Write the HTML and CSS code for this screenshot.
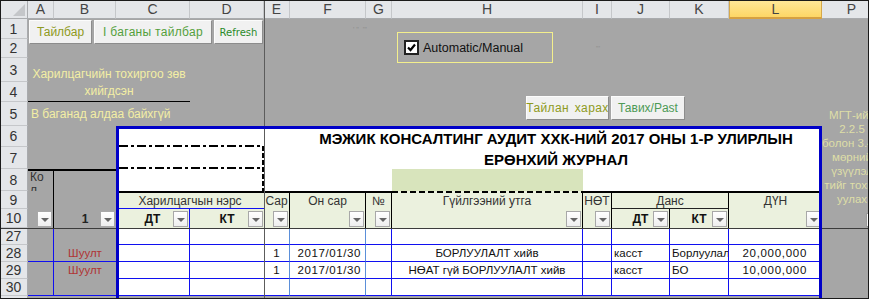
FILE: index.html
```html
<!DOCTYPE html>
<html lang="mn">
<head>
<meta charset="utf-8">
<title>Ерөнхий журнал</title>
<link rel="stylesheet" href="styles.css">
</head>
<body>
<div class="sheet">
  <!-- column headers -->
  <div class="corner col-rh row-h"><svg width="28" height="19" viewBox="0 0 28 19"><polygon points="13,16 25,16 25,4" fill="#c4c6c9"/></svg></div>
  <div class="ch col-a row-h">A</div>
  <div class="ch col-b row-h">B</div>
  <div class="ch col-c row-h">C</div>
  <div class="ch col-d row-h">D</div>
  <div class="ch col-e row-h">E</div>
  <div class="ch col-f row-h">F</div>
  <div class="ch col-g row-h">G</div>
  <div class="ch col-h row-h">H</div>
  <div class="ch col-i row-h">I</div>
  <div class="ch col-j row-h">J</div>
  <div class="ch col-k row-h">K</div>
  <div class="ch col-l row-h ch-sel">L</div>
  <div class="ch col-p row-h">P</div>

  <!-- row headers -->
  <div class="rh col-rh row-1">1</div>
  <div class="rh col-rh row-2">2</div>
  <div class="rh col-rh row-3">3</div>
  <div class="rh col-rh row-4">4</div>
  <div class="rh col-rh row-5">5</div>
  <div class="rh col-rh row-6">6</div>
  <div class="rh col-rh row-7">7</div>
  <div class="rh col-rh row-8">8</div>
  <div class="rh col-rh row-9">9</div>
  <div class="rh col-rh row-10">10</div>
  <div class="rh col-rh row-27">27</div>
  <div class="rh col-rh row-28">28</div>
  <div class="rh col-rh row-29">29</div>
  <div class="rh col-rh row-30">30</div>
  <div class="rh col-rh row-x"></div>

  <!-- top controls -->
  <div class="btnbar">
    <div class="btn btn-tailbar">Тайлбар</div>
    <div class="btn btn-col">I баганы тайлбар</div>
    <div class="btn btn-refresh">Refresh</div>
  </div>
  <div class="note note-main">Харилцагчийн тохиргоо зөв<br>хийгдсэн</div>
  <div class="note note-b">В баганад алдаа байхгүй</div>
  <div class="marks marks-1">' ''&nbsp;&nbsp;'''</div>
  <div class="marks marks-2">'''</div>
  <div class="chkgroup">
    <svg class="chk" width="15" height="15" viewBox="0 0 15 15"><rect x="1" y="1" width="13" height="13" fill="#fff" stroke="#222" stroke-width="2"/><path d="M4 7.5 L6.5 10 L11 4.5" fill="none" stroke="#000" stroke-width="2.2"/></svg>
    <span>Automatic/Manual</span>
  </div>
  <div class="btnbar2">
    <div class="btn btn-report">Тайлан харах</div>
    <div class="btn btn-past">Тавих/Past</div>
  </div>
  <div class="pnote">МГТ-ийн<br>2.2.5<br>болон 3.4.5<br>мөрний<br>үзүүлэл<br>тийг тохир<br>уулах</div>
  <div class="pbtn"></div>

  <!-- A8:B10 -->
  <div class="kol col-a row-8">Ко<br>л</div>
  <div class="b8 col-b row-8"></div>
  <div class="a9 col-a row-9"></div>
  <div class="a10 cellgrid col-a row-10"><span class="flt"></span></div>
  <div class="b10 cellgrid col-b row-10"><span class="lbl-mid">1</span><span class="flt"></span></div>

  <!-- title block -->
  <div class="tbl-white"></div>
  <div class="title">МЭЖИК КОНСАЛТИНГ АУДИТ ХХК-НИЙ 2017 ОНЫ 1-Р УЛИРЛЫН<br>ЕРӨНХИЙ ЖУРНАЛ</div>
  <svg class="dashes" width="148" height="65" viewBox="0 0 148 65">
    <line x1="3" y1="20" x2="147" y2="20" stroke="#000" stroke-width="2" stroke-dasharray="9 3 3 3"/>
    <line x1="3" y1="42" x2="147" y2="42" stroke="#000" stroke-width="2" stroke-dasharray="9 3 3 3"/>
    <line x1="147" y1="20" x2="147" y2="65" stroke="#000" stroke-width="2" stroke-dasharray="5 2"/>
  </svg>
  <div class="h8"></div>

  <!-- header rows 9-10 -->
  <div class="hc hc-name">Харилцагчын нэрс</div>
  <div class="hc cellgrid hc-sub col-c row-10 bl-blue"><span class="lbl-mid">ДТ</span><span class="flt"></span></div>
  <div class="hc cellgrid hc-sub col-d row-10"><span class="lbl-mid">КТ</span><span class="flt"></span></div>
  <div class="hc cellgrid hc-m col-e bk"><span class="lbl-top">Сар</span><span class="flt"></span></div>
  <div class="hc cellgrid hc-m col-f bk"><span class="lbl-top">Он сар</span><span class="flt"></span></div>
  <div class="hc cellgrid hc-m col-g bk"><span class="lbl-top">№</span><span class="flt"></span></div>
  <div class="hc cellgrid hc-m hc-dash col-h bk"><span class="lbl-top">Гүйлгээний утга</span><span class="flt"></span></div>
  <div class="hc cellgrid hc-m col-i bk"><span class="lbl-top">НӨТ</span><span class="flt"></span></div>
  <div class="hc hc-dans">Данс</div>
  <div class="hc cellgrid hc-sub col-j row-10 bk"><span class="lbl-mid">ДТ</span><span class="flt"></span></div>
  <div class="hc cellgrid hc-sub col-k row-10 bk"><span class="lbl-mid">КТ</span><span class="flt"></span></div>
  <div class="hc cellgrid hc-m col-l"><span class="lbl-top">ДҮН</span><span class="flt"></span></div>

  <!-- A-B data area -->
  <div class="ga col-a row-27"></div>
  <div class="ga ul col-a row-28"></div>
  <div class="ga col-a row-29"></div>
  <div class="ga ul col-a row-30"></div>
  <div class="gb col-b row-27"></div>
  <div class="gb ul col-b row-28">Шуулт</div>
  <div class="gb col-b row-29">Шуулт</div>
  <div class="gb ul col-b row-30"></div>

  <!-- row 27 -->
  <div class="d col-c row-27"></div>
  <div class="d col-d row-27"></div>
  <div class="d col-e row-27"></div>
  <div class="d col-f row-27"></div>
  <div class="d col-g row-27"></div>
  <div class="d col-h row-27"></div>
  <div class="d col-i row-27"></div>
  <div class="d col-j row-27"></div>
  <div class="d col-k row-27"></div>
  <div class="d col-l row-27"></div>
  <!-- row 28 -->
  <div class="d col-c row-28"></div>
  <div class="d col-d row-28"></div>
  <div class="d tc col-e row-28">1</div>
  <div class="d tr num col-f row-28">2017/01/30</div>
  <div class="d col-g row-28"></div>
  <div class="d tc col-h row-28">БОРЛУУЛАЛТ хийв</div>
  <div class="d col-i row-28"></div>
  <div class="d col-j row-28">касст</div>
  <div class="d col-k row-28">Борлуулалт</div>
  <div class="d tr amt col-l row-28">20,000,000</div>
  <!-- row 29 -->
  <div class="d col-c row-29"></div>
  <div class="d col-d row-29"></div>
  <div class="d tc col-e row-29">1</div>
  <div class="d tr num col-f row-29">2017/01/30</div>
  <div class="d col-g row-29"></div>
  <div class="d tc col-h row-29">НӨАТ гүй БОРЛУУЛАЛТ хийв</div>
  <div class="d col-i row-29"></div>
  <div class="d col-j row-29">касст</div>
  <div class="d col-k row-29">БО</div>
  <div class="d tr amt col-l row-29">10,000,000</div>
  <!-- row 30 -->
  <div class="d col-c row-30"></div>
  <div class="d col-d row-30"></div>
  <div class="d col-e row-30"></div>
  <div class="d col-f row-30"></div>
  <div class="d col-g row-30"></div>
  <div class="d col-h row-30"></div>
  <div class="d col-i row-30"></div>
  <div class="d col-j row-30"></div>
  <div class="d col-k row-30"></div>
  <div class="d col-l row-30"></div>

  <!-- overlays: frozen panes and table frame -->
  <div class="frz-v"></div>
  <div class="frz-h"></div>
  <div class="frame"></div>
  <div class="outline"></div>
</div>
</body>
</html>
```

FILE: styles.css
```css
* { box-sizing: border-box; margin: 0; padding: 0; }

body {
  margin: 0;
  background: #a6a6a6;
  font-family: "Liberation Sans", Arial, sans-serif;
  color: #222;
}

.sheet {
  position: relative;
  width: 869px;
  height: 299px;
  overflow: hidden;
  display: grid;
  grid-template-columns: 28px 26px 62px 74px 74px 26px 76px 26px 191px 29px 58px 59px 93px 60px;
  grid-template-rows: 19px 20px 19px 24px 20px 24px 21px 22px 22px 18px 19px 17px 17px 17px 17px 3px;
  background: #a6a6a6;
}

/* placement helpers */
.col-rh { grid-column: 1; }
.col-a { grid-column: 2; }
.col-b { grid-column: 3; }
.col-c { grid-column: 4; }
.col-d { grid-column: 5; }
.col-e { grid-column: 6; }
.col-f { grid-column: 7; }
.col-g { grid-column: 8; }
.col-h { grid-column: 9; }
.col-i { grid-column: 10; }
.col-j { grid-column: 11; }
.col-k { grid-column: 12; }
.col-l { grid-column: 13; }
.col-p { grid-column: 14; }

.row-h { grid-row: 1; }
.row-1 { grid-row: 2; }
.row-2 { grid-row: 3; }
.row-3 { grid-row: 4; }
.row-4 { grid-row: 5; }
.row-5 { grid-row: 6; }
.row-6 { grid-row: 7; }
.row-7 { grid-row: 8; }
.row-8 { grid-row: 9; }
.row-9 { grid-row: 10; }
.row-10 { grid-row: 11; }
.row-27 { grid-row: 12; }
.row-28 { grid-row: 13; }
.row-29 { grid-row: 14; }
.row-30 { grid-row: 15; }
.row-x { grid-row: 16; }

/* headers */
.corner {
  background: #e4e6e9;
  border-right: 1px solid #a9abae;
  border-bottom: 1px solid #a9abae;
}
.corner svg { display: block; }

.ch {
  background: #e4e6e9;
  border-right: 1px solid #c5c7ca;
  border-bottom: 1px solid #a9abae;
  font-size: 14px;
  line-height: 18px;
  text-align: center;
  color: #444;
}
.ch-sel {
  background: linear-gradient(#ffe89a, #fdd665);
  border-left: 1px solid #d6a84a;
  border-right: 1px solid #d6a84a;
  border-bottom: 2px solid #d6a041;
}

.rh {
  background: #e4e6e9;
  border-right: 1px solid #a9abae;
  border-bottom: 1px solid #c5c7ca;
  font-size: 14px;
  text-align: center;
  color: #333;
  display: flex;
  align-items: center;
  justify-content: center;
}

/* buttons */
.btnbar {
  grid-column: 2 / 6;
  grid-row: 2 / 4;
  display: flex;
  align-items: flex-start;
  gap: 2px;
  padding: 1px 0 0 1px;
  z-index: 2;
}
.btnbar2 {
  grid-column: 9 / 13;
  grid-row: 5 / 7;
  display: flex;
  align-items: flex-start;
  gap: 2px;
  padding: 14px 0 0 134px;
  z-index: 2;
}
.btn {
  height: 24px;
  display: flex;
  align-items: center;
  justify-content: center;
  background: #f1f1f1;
  border: 1px solid;
  border-color: #fcfcfc #8c8c8c #8c8c8c #fcfcfc;
  font-size: 12px;
  white-space: nowrap;
}
.btn-tailbar { width: 63px; color: #8e9a22; }
.btn-col { width: 118px; color: #54a03c; letter-spacing: 0.3px; }
.btn-refresh {
  width: 49px;
  color: #2a8a2a;
  font-family: "DejaVu Sans", sans-serif;
  font-size: 10px;
}
.btn-report { width: 83px; color: #8e9a22; letter-spacing: 0.4px; word-spacing: 2px; }
.btn-past { width: 74px; color: #4d9a55; }

/* notes */
.note {
  color: #f3eea4;
  font-size: 12px;
  white-space: nowrap;
}
.note-main {
  grid-column: 2 / 5;
  grid-row: 4 / 6;
  border-bottom: 1px solid #000;
  display: flex;
  flex-direction: column;
  justify-content: flex-end;
  text-align: center;
  line-height: 17px;
  padding-bottom: 1px;
}
.note-b {
  grid-column: 2 / 6;
  grid-row: 6;
  line-height: 24px;
  padding-left: 3px;
}

.marks {
  font-size: 7px;
  color: #8d8d8d;
  white-space: nowrap;
  line-height: 8px;
}
.marks-1 { grid-column: 7 / 9; grid-row: 2; padding: 7px 0 0 63px; }
.marks-2 { grid-column: 10 / 12; grid-row: 3; padding: 6px 0 0 13px; }

.chkgroup {
  grid-column: 9;
  grid-row: 2 / 5;
  margin: 13px 0 0 5px;
  width: 156px;
  height: 31px;
  border: 1px solid #f3ef8c;
  display: flex;
  align-items: center;
  gap: 4px;
  padding-left: 6px;
  font-size: 12.5px;
  color: #111;
  z-index: 2;
}
.chk { display: block; flex: none; }

.pnote {
  grid-column: 14;
  grid-row: 6 / 12;
  width: 60px;
  padding-top: 6px;
  text-align: center;
  font-size: 11.5px;
  line-height: 14px;
  color: #dedea6;
  white-space: nowrap;
}
.pbtn {
  grid-column: 14;
  grid-row: 11;
  margin: 4px 0 0 44px;
  width: 16px;
  height: 14px;
  background: #f6f6f6;
  border: 1px solid #9a9a9a;
}

/* A8:B10 */
.kol {
  border-top: 2px solid #000;
  border-right: 1px solid #000;
  font-size: 12px;
  line-height: 13px;
  color: #333;
  padding-left: 2px;
  overflow: hidden;
}
.b8 { border-top: 2px solid #000; }
.a9, .a10 { border-right: 1px solid #000; }
.b10 { font-weight: bold; font-size: 12px; color: #222; }

/* generic cell with overlapping label + filter */
.cellgrid { display: grid; }
.cellgrid > * { grid-area: 1 / 1; }
.lbl-top { align-self: start; justify-self: center; }
.lbl-mid { align-self: center; justify-self: center; }
.flt {
  align-self: end;
  justify-self: end;
  width: 15px;
  height: 16px;
  margin: 0 1px 1px 0;
  background: linear-gradient(#ffffff, #eeeeee);
  border: 1px solid #a8a8a8;
  display: flex;
  align-items: center;
  justify-content: center;
}
.flt::after {
  content: "";
  width: 0;
  height: 0;
  border-left: 4px solid transparent;
  border-right: 4px solid transparent;
  border-top: 4px solid #666;
  margin-top: 1px;
}

/* title block */
.tbl-white {
  grid-column: 4 / 14;
  grid-row: 7 / 10;
  background: #fff;
}
.title {
  grid-column: 7 / 14;
  grid-row: 7 / 9;
  display: flex;
  align-items: center;
  justify-content: center;
  text-align: center;
  font-weight: bold;
  font-size: 15px;
  line-height: 21px;
  color: #000;
  padding-top: 2px;
  z-index: 2;
}
.dashes {
  grid-column: 4 / 6;
  grid-row: 7 / 10;
  display: block;
  z-index: 3;
}
.h8 {
  grid-column: 9;
  grid-row: 9;
  background: #d8e4bc;
}

/* table header */
.hc {
  background: #ebf1de;
  color: #333;
  font-size: 12px;
  line-height: 16px;
  text-align: center;
  white-space: nowrap;
}
.hc-name {
  grid-column: 4 / 6;
  grid-row: 10;
  border-top: 2px solid #000;
  border-bottom: 1px solid #1010f0;
}
.hc-dans {
  grid-column: 11 / 13;
  grid-row: 10;
  border-top: 2px solid #000;
  border-bottom: 1px solid #222;
  border-right: 1px solid #000;
}
.hc-m {
  grid-row: 10 / 12;
  border-top: 2px solid #000;
}
.hc-dash {
  border-top: none;
  padding-top: 2px;
  background: repeating-linear-gradient(90deg, #000 0 6px, transparent 6px 9px) top left / 100% 2px no-repeat, #ebf1de;
}
.hc-sub { font-weight: bold; color: #111; }
.bk { border-right: 1px solid #000; }
.bl-blue { border-right: 1px solid #1010f0; }

/* data area */
.ga { border-right: 1px solid #1010f0; }
.ul { border-bottom: 1px solid #1010f0; }
.gb {
  color: #b03434;
  font-size: 11.5px;
  line-height: 16px;
  text-align: center;
}

.d {
  background: #fff;
  border-right: 1px solid #1010f0;
  border-bottom: 1px solid #1010f0;
  font-size: 11.5px;
  line-height: 16px;
  padding: 0 2px;
  white-space: nowrap;
  overflow: hidden;
  color: #111;
}
.d.col-d, .d.col-l { border-right: none; }
.d.col-e, .d.col-f { border-right-color: #5b8fd9; }
.tc { text-align: center; }
.tr { text-align: right; }
.num { padding-right: 4px; letter-spacing: 0.6px; }
.amt { padding-right: 15px; letter-spacing: 0.7px; }

/* overlays */
.frz-v {
  grid-column: 6;
  grid-row: 1 / 17;
  border-left: 1px solid #5c5c5c;
  z-index: 5;
  pointer-events: none;
}
.frz-h {
  grid-column: 1 / 15;
  grid-row: 12;
  border-top: 1px solid #3c3c3c;
  z-index: 5;
  pointer-events: none;
}
.frame {
  grid-column: 4 / 14;
  grid-row: 7 / 17;
  border: 3px solid #0000c8;
  border-bottom: none;
  z-index: 6;
  pointer-events: none;
}
.outline {
  position: absolute;
  inset: 0;
  border: 1px solid #1a1a1a;
  z-index: 7;
  pointer-events: none;
}
```
